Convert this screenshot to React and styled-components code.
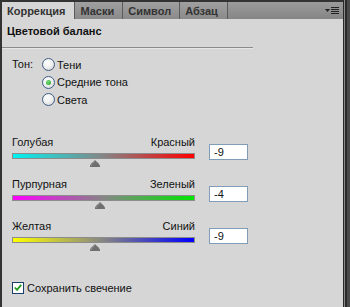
import React from "react";
import styled, { createGlobalStyle } from "styled-components";

const Global = createGlobalStyle`
  html, body { margin: 0; padding: 0; background: #3a3a3a; }
  body { font-family: "Liberation Sans", Arial, sans-serif; font-size: 11px; }
`;

const Frame = styled.div`
  width: 350px;
  height: 307px;
  display: flex;
  background: #333;
  overflow: hidden;
`;

const Panel = styled.div`
  margin-left: 2px;
  width: 342px;
  display: flex;
  flex-direction: column;
`;

const EdgeStrip = styled.div`
  width: 6px;
  display: flex;
  border-left: 1px solid #2a2a2a;
`;
const EdgeLine = styled.div`
  width: ${(p) => p.$w}px;
  background: ${(p) => p.$c};
`;

const TabBar = styled.div`
  margin-top: 2px;
  height: 17px;
  display: flex;
  align-items: stretch;
  background: linear-gradient(#9b9b9b, #858585);
`;

const Tab = styled.div`
  display: flex;
  align-items: center;
  padding: 0 ${(p) => p.$pad}px 0 5px;
  font-weight: bold;
  font-size: 11px;
  color: #333;
  background: ${(p) => (p.$active ? "#d6d6d6" : "linear-gradient(#a0a0a0, #8a8a8a)")};
  border-right: 1px solid #5a5a5a;
`;

const TabFill = styled.div`
  flex: 1;
  display: flex;
  align-items: center;
  justify-content: flex-end;
  padding-right: 4px;
`;

const Content = styled.div`
  flex: 1;
  background: #d6d6d6;
  display: flex;
  flex-direction: column;
`;

const Heading = styled.div`
  margin: 6px 0 0 5px;
  font-weight: bold;
  font-size: 11px;
  line-height: 13px;
  color: #111;
`;

const Divider = styled.div`
  margin-top: 9px;
  width: 251px;
  height: 1px;
  background: #8a8a8a;
  border-bottom: 1px solid #e6e6e6;
`;

const ToneRow = styled.div`
  display: flex;
  margin: 7px 0 0 10px;
`;

const ToneLabel = styled.div`
  width: 30px;
  line-height: 13px;
  margin-top: 2px;
  color: #111;
`;

const RadioCol = styled.div`
  display: flex;
  flex-direction: column;
`;

const RadioRow = styled.div`
  display: flex;
  align-items: center;
  height: 17.5px;
  gap: 2px;
  color: #111;
`;

const RadioCircle = styled.div`
  width: 11px;
  height: 11px;
  border-radius: 50%;
  border: 1px solid #3f5f86;
  background: radial-gradient(circle at 40% 35%, #ffffff 0%, #eeeeee 50%, #c9c9c9 100%);
  display: flex;
  align-items: center;
  justify-content: center;
`;

const RadioDot = styled.div`
  width: 5px;
  height: 5px;
  border-radius: 50%;
  background: radial-gradient(circle at 40% 35%, #7be07b, #1b9b1b);
`;

const Sliders = styled.div`
  display: flex;
  flex-direction: column;
  margin: 27px 0 0 10px;
`;

const SliderSection = styled.div`
  display: flex;
  height: 42px;
`;

const SliderCol = styled.div`
  width: 183px;
  display: flex;
  flex-direction: column;
`;

const LabelRow = styled.div`
  display: flex;
  justify-content: space-between;
  line-height: 13px;
  color: #111;
`;

const Bar = styled.div`
  margin-top: 4px;
  height: 4px;
  border: 1px solid #8c8c8c;
  background: linear-gradient(to right, ${(p) => p.$from}, #858585 50%, ${(p) => p.$to});
`;

const ThumbTrack = styled.div`
  position: relative;
  height: 8px;
`;

const Thumb = styled.svg`
  position: absolute;
  top: 1px;
  margin-left: -5px;
`;

const ValueBox = styled.div`
  margin: 8px 0 0 14px;
  width: 37px;
  height: 14px;
  border: 1px solid #7f9db9;
  background: #fff;
  line-height: 14px;
  color: #111;
  box-sizing: content-box;
  text-indent: 4px;
`;

const CheckRow = styled.div`
  display: flex;
  align-items: center;
  gap: 3px;
  margin: 20px 0 0 10px;
  color: #111;
`;

const CheckBox = styled.div`
  width: 10px;
  height: 10px;
  border: 1px solid #1c3f6a;
  background: #fff;
  display: flex;
  align-items: center;
  justify-content: center;
`;

const sliders = [
  { left: "Голубая", right: "Красный", from: "#00f2f2", to: "#ff0000", value: -9 },
  { left: "Пурпурная", right: "Зеленый", from: "#ff00ff", to: "#00e600", value: -4 },
  { left: "Желтая", right: "Синий", from: "#ffff00", to: "#0000ff", value: -9 },
];

const tones = ["Тени", "Средние тона", "Света"];

function MenuIcon() {
  return (
    <svg width="14" height="8" viewBox="0 0 14 8">
      <polygon points="0,2 5,2 2.5,5" fill="#222" />
      <rect x="6" y="0" width="8" height="1" fill="#222" />
      <rect x="6" y="2" width="8" height="1" fill="#222" />
      <rect x="6" y="4" width="8" height="1" fill="#222" />
      <rect x="6" y="6" width="8" height="1" fill="#222" />
    </svg>
  );
}

export default function App() {
  return (
    <>
      <Global />
      <Frame>
        <Panel>
          <TabBar>
            <Tab $active $pad={9}>Коррекция</Tab>
            <Tab $pad={8}>Маски</Tab>
            <Tab $pad={8}>Символ</Tab>
            <Tab $pad={9}>Абзац</Tab>
            <TabFill>
              <MenuIcon />
            </TabFill>
          </TabBar>
          <Content>
            <Heading>Цветовой баланс</Heading>
            <Divider />
            <ToneRow>
              <ToneLabel>Тон:</ToneLabel>
              <RadioCol>
                {tones.map((t, i) => (
                  <RadioRow key={t}>
                    <RadioCircle>{i === 1 && <RadioDot />}</RadioCircle>
                    {t}
                  </RadioRow>
                ))}
              </RadioCol>
            </ToneRow>
            <Sliders>
              {sliders.map((s) => (
                <SliderSection key={s.left}>
                  <SliderCol>
                    <LabelRow>
                      <span>{s.left}</span>
                      <span>{s.right}</span>
                    </LabelRow>
                    <Bar $from={s.from} $to={s.to} />
                    <ThumbTrack>
                      <Thumb
                        width="10"
                        height="7"
                        viewBox="0 0 10 7"
                        style={{ left: `${((s.value + 100) / 200) * 183}px` }}
                      >
                        <path d="M5 0 C6 1.5 10 4 10 6 L10 7 L0 7 L0 6 C0 4 4 1.5 5 0 Z" fill="#6f6f6f" />
                        <path d="M5 1 C4 2.5 1 4.5 1 6" stroke="#9a9a9a" strokeWidth="0.8" fill="none" />
                      </Thumb>
                    </ThumbTrack>
                  </SliderCol>
                  <ValueBox>{s.value}</ValueBox>
                </SliderSection>
              ))}
            </Sliders>
            <CheckRow>
              <CheckBox>
                <svg width="8" height="7" viewBox="0 0 8 7">
                  <path d="M0.8 3.5 L3 5.8 L7.2 0.8" stroke="#1f9a1f" strokeWidth="1.8" fill="none" />
                </svg>
              </CheckBox>
              Сохранить свечение
            </CheckRow>
          </Content>
        </Panel>
        <EdgeStrip>
          <EdgeLine $w={1} $c="#8a8a8a" />
          <EdgeLine $w={2} $c="#2b2b2b" />
          <EdgeLine $w={3} $c="#4a4a4a" />
        </EdgeStrip>
      </Frame>
    </>
  );
}
